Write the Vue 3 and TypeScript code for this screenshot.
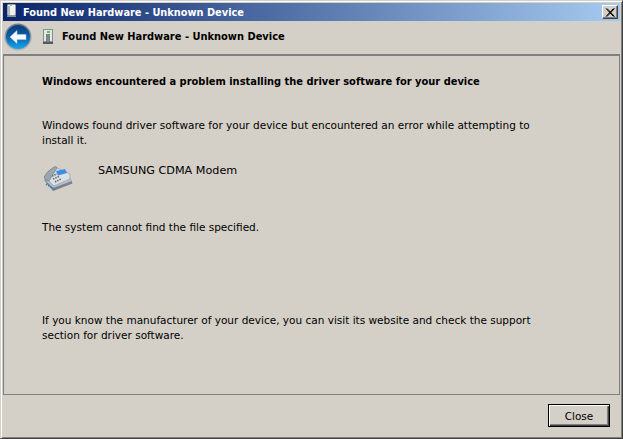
<script setup lang="ts">
const bodyA = 'Windows found driver software for your device but encountered an error while attempting to install it.'
const bodyB = 'If you know the manufacturer of your device, you can visit its website and check the support section for driver software.'
</script>

<template>
  <div class="window">
    <div class="titlebar">
      <svg class="title-icon" width="16" height="16" viewBox="0 0 16 16">
        <rect x="2.5" y="0.5" width="8" height="11" rx="1" fill="#eef1f2" stroke="#9aa2a6" />
        <rect x="3" y="2" width="2" height="9" fill="#b4bcc0" />
        <rect x="5" y="1" width="2" height="1" fill="#7fd06a" />
        <rect x="2" y="11.5" width="9" height="1.5" fill="#8a9094" />
      </svg>
      <span class="title-text">Found New Hardware - Unknown Device</span>
      <div class="close-x">
        <svg width="10" height="9" viewBox="0 0 10 9">
          <path d="M1 0.5 L8.5 8.5 M2 0.5 L9.5 8.5 M8.5 0.5 L1 8.5 M9.5 0.5 L2 8.5" stroke="#000" stroke-width="1" fill="none" />
        </svg>
      </div>
    </div>
    <div class="navbar">
      <svg class="back" width="28" height="28" viewBox="0 0 28 28">
        <defs>
          <linearGradient id="orb" x1="0" y1="0" x2="0" y2="1">
            <stop offset="0" stop-color="#0b3a78" />
            <stop offset="0.5" stop-color="#0a62ac" />
            <stop offset="1" stop-color="#18a8ec" />
          </linearGradient>
          <linearGradient id="ring" x1="0" y1="0" x2="0" y2="1">
            <stop offset="0" stop-color="#6f7a84" />
            <stop offset="1" stop-color="#b0b6b8" />
          </linearGradient>
        </defs>
        <circle cx="14" cy="14" r="13.5" fill="url(#ring)" />
        <circle cx="14" cy="14" r="12" fill="url(#orb)" />
        <path d="M6 14 L13 7.5 V11.5 H22 V16.5 H13 V20.5 Z" fill="#f6fafd" stroke="#9fd0ee" stroke-width="0.6" />
      </svg>
      <svg class="nav-icon" width="16" height="16" viewBox="0 0 16 16">
        <rect x="3.5" y="0.5" width="9" height="12" fill="#e3e7e6" stroke="#868e8e" />
        <rect x="7" y="2" width="3" height="2" fill="#58c840" />
        <rect x="6" y="5" width="4" height="8" fill="#7e8686" />
        <rect x="3" y="13" width="10" height="2" fill="#555b5b" />
      </svg>
      <span class="nav-title">Found New Hardware - Unknown Device</span>
    </div>
    <div class="panel">
      <p class="heading">Windows encountered a problem installing the driver software for your device</p>
      <p class="para first">{{ bodyA }}</p>
      <div class="device">
        <svg width="30" height="26" viewBox="0 0 30 26">
          <path d="M1 14 L10 25 L29.5 17.5 L28 13 L8 8 Z" fill="#77828c" />
          <path d="M1 13 L10 22 L29 15 L24 9 Z" fill="#b9c1c7" />
          <path d="M3 12 L12 1 L27 8 L27 13 L11 20 Z" fill="#dbe0e4" stroke="#8a949c" stroke-width="0.6" />
          <path d="M1 11 Q4 5 11 1 Q14 0 14 2 L6 15 Q2 15 1 11 Z" fill="#9aa5ad" stroke="#6a747c" stroke-width="0.6" />
          <path d="M13 5 L22 3 L24 7 L15 9.5 Z" fill="#3d8fe0" />
          <path d="M9 10 L14 8 M10 13 L16 10.5 M12 16 L18 13" stroke="#626e76" stroke-width="1.6" stroke-dasharray="1.5 1" />
          <path d="M3 18 L12 23.5" stroke="#2f7fcc" stroke-width="1.6" stroke-dasharray="1.5 1" />
        </svg>
        <span class="device-name">SAMSUNG CDMA Modem</span>
      </div>
      <p class="para error">The system cannot find the file specified.</p>
      <div class="spacer"></div>
      <p class="para last">{{ bodyB }}</p>
    </div>
    <div class="footer">
      <button class="close-btn">Close</button>
    </div>
  </div>
</template>

<style>
html, body { margin: 0; padding: 0; background: #d4d0c8; overflow: hidden; }
</style>

<style scoped>
.window {
  width: 623px;
  height: 439px;
  box-sizing: border-box;
  background: #d4d0c8;
  border-top: 1px solid #d4d0c8;
  border-left: 1px solid #d4d0c8;
  border-right: 1px solid #404040;
  border-bottom: 1px solid #404040;
  box-shadow: inset 1px 1px 0 #fff, inset -1px -1px 0 #808080;
  padding: 2px;
  display: flex;
  flex-direction: column;
  font-family: "DejaVu Sans", sans-serif;
  font-size: 10.5px;
  color: #000;
}
.titlebar {
  height: 18px;
  flex: none;
  background: linear-gradient(to right, #0a246a, #a6caf0);
  display: flex;
  align-items: center;
  padding: 0 2px;
}
.title-icon { flex: none; margin-right: 2px; }
.title-text {
  color: #fff;
  font-weight: 700;
  font-size: 9.8px;
  white-space: nowrap;
  flex: 1;
}
.close-x {
  width: 16px;
  height: 14px;
  box-sizing: border-box;
  background: #d4d0c8;
  border: 1px solid;
  border-color: #fff #404040 #404040 #fff;
  box-shadow: inset -1px -1px 0 #808080;
  display: flex;
  align-items: center;
  justify-content: center;
}
.navbar {
  height: 33px;
  flex: none;
  box-sizing: border-box;
  padding-bottom: 2px;
  display: flex;
  align-items: center;
}
.back { flex: none; margin-left: 1px; }
.nav-icon { flex: none; margin-left: 8px; }
.nav-title {
  margin-left: 6px;
  font-weight: 700;
  font-size: 9.9px;
  white-space: nowrap;
}
.panel {
  height: 341px;
  flex: none;
  box-sizing: border-box;
  border-top: 2px solid #808080;
  border-left: 1px solid #808080;
  border-right: 1px solid #808080;
  border-bottom: 1px solid #808080;
  padding: 18px 38px 0 38px;
  display: flex;
  flex-direction: column;
}
.panel p { margin: 0; line-height: 15px; }
.heading { font-weight: 700; font-size: 9.9px; }
.first { margin-top: 29px !important; width: 500px; }
.device {
  display: flex;
  align-items: flex-start;
  margin-top: 15px;
  height: 44px;
}
.device svg { flex: none; margin: 3px 0 0 1px; }
.device-name { margin-left: 25px; line-height: 15px; font-size: 11.2px; }
.error { margin-top: 13px !important; }
.spacer { height: 78px; flex: none; }
.last { width: 500px; }
.footer {
  flex: 1;
  display: flex;
  justify-content: flex-end;
  align-items: flex-start;
  padding: 9px 10px 0 0;
}
.close-btn {
  width: 62px;
  height: 23px;
  box-sizing: border-box;
  background: #d4d0c8;
  border: 1px solid #000;
  box-shadow: inset 1px 1px 0 #fff, inset -1px -1px 0 #404040, inset -2px -2px 0 #808080;
  font-family: inherit;
  font-size: 10.5px;
  color: #000;
  padding: 0;
}
</style>
